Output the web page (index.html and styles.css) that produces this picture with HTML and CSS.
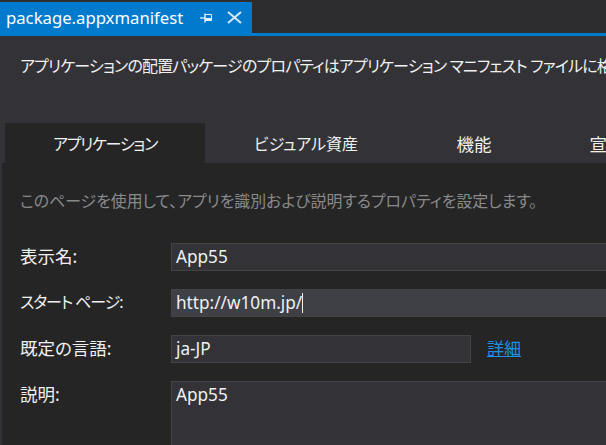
FILE: index.html
```html
<!DOCTYPE html>
<html lang="ja">
<head>
    <meta charset="UTF-8">
    <meta name="viewport" content="width=device-width, initial-scale=1.0">
    <title>package.appxmanifest</title>
    <link rel="stylesheet" href="styles.css">
</head>
<body>
    <div class="tab-strip">
        <div class="doc-tab">
            <span class="doc-name">package.appxmanifest</span>
            <svg class="pin-icon" width="12" height="12" viewBox="0 0 12 12">
                <path d="M0 6H5" stroke="#cfe6f6" stroke-width="1.4" fill="none"/>
                <path d="M5 1.5V10.5" stroke="#e6f2fa" stroke-width="1.4" fill="none"/>
                <path d="M5 2.5H11.5V8.5H5" stroke="#e6f2fa" stroke-width="1" fill="none"/>
                <rect x="5" y="6" width="6.5" height="2.5" fill="#e6f2fa"/>
            </svg>
            <svg class="close-icon" width="15" height="15" viewBox="0 0 15 15">
                <path d="M1 2L14 13M14 2L1 13" stroke="#d5e9f7" stroke-width="2" fill="none"/>
            </svg>
        </div>
    </div>
    <div class="designer">
        <p class="intro">アプリケーションの配置パッケージのプロパティはアプリケーション マニフェスト ファイルに格納されています。</p>
        <div class="page-tabs">
            <div class="page-tab active">アプリケーション</div>
            <div class="page-tab visual">ビジュアル資産</div>
            <div class="page-tab caps">機能</div>
            <div class="page-tab decl">宣言</div>
        </div>
        <div class="page">
            <p class="hint">このページを使用して、アプリを識別および説明するプロパティを設定します。</p>
            <div class="form-row">
                <label>表示名:</label>
                <div class="field">App55</div>
            </div>
            <div class="form-row">
                <label class="kana">スタート ページ:</label>
                <div class="field focused">http://w10m.jp/<span class="caret"></span></div>
            </div>
            <div class="form-row">
                <label>既定の言語:</label>
                <div class="field short">ja-JP</div>
                <a class="more" href="#">詳細</a>
            </div>
            <div class="form-row">
                <label>説明:</label>
                <div class="field area">App55</div>
            </div>
        </div>
    </div>
</body>
</html>
```

FILE: styles.css
```css
html, body {
    margin: 0;
    padding: 0;
    width: 606px;
    height: 445px;
    overflow: hidden;
}
body {
    background-color: #2d2d30;
    color: #f1f1f1;
    font-family: "Noto Sans", "Noto Sans CJK JP", sans-serif;
    font-feature-settings: "palt";
    font-size: 16px;
}
.tab-strip {
    height: 33px;
    padding-top: 2px;
    box-sizing: border-box;
}
.doc-tab {
    width: 252px;
    height: 31px;
    background-color: #007acc;
    color: #fff;
    display: flex;
    align-items: center;
    box-sizing: border-box;
    padding-left: 6px;
}
.doc-name {
    width: 194px;
    font-size: 16.7px;
    line-height: 31px;
    white-space: nowrap;
}
.pin-icon {
    margin-right: 15px;
}
.designer {
    height: 412px;
    border-top: 3px solid #007acc;
    background-color: #333337;
    box-sizing: border-box;
    overflow: hidden;
}
.intro {
    margin: 0;
    height: 87px;
    padding: 15px 0 0 20px;
    box-sizing: border-box;
    font-size: 16px;
    letter-spacing: -0.83px;
    line-height: 30px;
    white-space: nowrap;
}
.page-tabs {
    height: 40px;
    padding-left: 5px;
    display: flex;
    white-space: nowrap;
}
.page-tab {
    font-size: 16px;
    line-height: 42px;
    text-align: center;
    flex: none;
}
.page-tab.active {
    width: 200px;
    background-color: #252526;
    letter-spacing: -1.25px;
}
.page-tab.visual {
    width: 202px;
}
.page-tab.caps {
    width: 134px;
    font-size: 17.5px;
}
.page-tab.decl {
    width: 132px;
    font-size: 17.5px;
}
.page {
    margin-left: 2px;
    height: 282px;
    background-color: #252526;
    padding: 20px 0 0 18px;
    box-sizing: border-box;
}
.hint {
    margin: 0 0 24px;
    color: #8a8a8a;
    font-size: 15.9px;
    line-height: 36px;
    white-space: nowrap;
}
.form-row {
    display: flex;
    margin-bottom: 18px;
    align-items: flex-start;
}
label {
    width: 151px;
    flex: none;
    font-size: 17.5px;
    line-height: 26px;
    white-space: nowrap;
}
label.kana {
    font-size: 16px;
    letter-spacing: -1.1px;
}
.field {
    width: 480px;
    height: 28px;
    flex: none;
    box-sizing: border-box;
    background-color: #333337;
    border: 1px solid #434346;
    padding-left: 4px;
    font-size: 17.2px;
    line-height: 26px;
    color: #f1f1f1;
    white-space: nowrap;
}
.field.focused {
    background-color: #3f3f46;
}
.caret {
    display: inline-block;
    width: 1px;
    height: 20px;
    background-color: #f1f1f1;
    vertical-align: -4px;
}
.field.short {
    width: 300px;
}
.more {
    margin-left: 16px;
    color: #1e90e8;
    font-size: 17px;
    line-height: 28px;
    text-decoration: underline;
}
.field.area {
    height: 100px;
}
```
